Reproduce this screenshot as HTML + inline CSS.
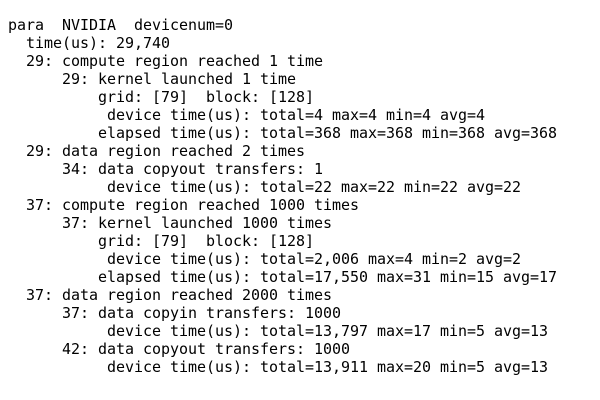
<!DOCTYPE html>
<html><head><meta charset="utf-8"><style>
html,body{margin:0;padding:0;background:#fff;width:600px;height:400px;overflow:hidden}
pre{margin:0;position:absolute;left:8px;top:16px;font-family:"DejaVu Sans Mono","Liberation Mono",monospace;font-size:15px;letter-spacing:-0.03px;line-height:18px;color:#000}
</style></head><body><pre>para  NVIDIA  devicenum=0
  time(us): 29,740
  29: compute region reached 1 time
      29: kernel launched 1 time
          grid: [79]  block: [128]
           device time(us): total=4 max=4 min=4 avg=4
          elapsed time(us): total=368 max=368 min=368 avg=368
  29: data region reached 2 times
      34: data copyout transfers: 1
           device time(us): total=22 max=22 min=22 avg=22
  37: compute region reached 1000 times
      37: kernel launched 1000 times
          grid: [79]  block: [128]
           device time(us): total=2,006 max=4 min=2 avg=2
          elapsed time(us): total=17,550 max=31 min=15 avg=17
  37: data region reached 2000 times
      37: data copyin transfers: 1000
           device time(us): total=13,797 max=17 min=5 avg=13
      42: data copyout transfers: 1000
           device time(us): total=13,911 max=20 min=5 avg=13
</pre></body></html>
